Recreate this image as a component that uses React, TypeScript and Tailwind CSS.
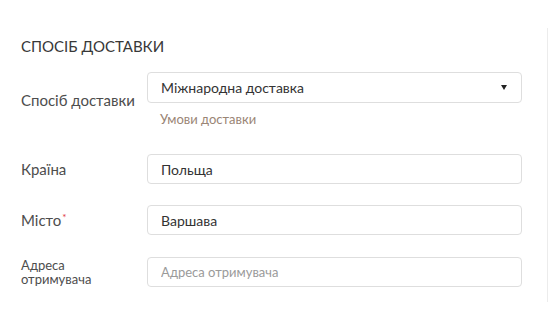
export default function App() {
  return (
    <div className="w-[548px] h-[330px] overflow-hidden bg-white pt-[28px] font-['Lato','Noto_Sans',sans-serif] text-[#333]">
      <div className="h-[274px] border-r border-[#ececec] pl-[21px] pr-[25px]">
        <h2 className="pt-[8px] text-[15px] leading-[20px] font-normal text-[#383838]">
          СПОСІБ ДОСТАВКИ
        </h2>
        <div className="mt-[16px] flex items-center">
          <div className="w-[126px] text-[15px] leading-[18px] text-[#4d4d4d]">Спосіб доставки</div>
          <div className="flex-1">
            <div className="h-[31px] rounded-[4px] border border-[#dedede] flex items-center justify-between pl-[13px] pr-[12px] text-[14px] text-[#333]">
              <span>Міжнародна доставка</span>
              <svg width="6" height="5" viewBox="0 0 6 5" className="mr-[2px]">
                <path d="M0 0 L6 0 L3 5 Z" fill="#222" />
              </svg>
            </div>
            <a className="mt-[7px] ml-[13px] block text-[13px] leading-[18px] text-[#9a8575]">Умови доставки</a>
          </div>
        </div>
        <div className="mt-[26px] flex items-center">
          <div className="w-[126px] text-[15px] leading-[18px] text-[#4d4d4d]">Країна</div>
          <div className="flex-1 h-[30px] rounded-[4px] border border-[#dedede] flex items-center pl-[13px] text-[14px] text-[#333]">
            Польща
          </div>
        </div>
        <div className="mt-[21px] flex items-center">
          <div className="w-[126px] text-[15px] leading-[18px] text-[#4d4d4d]">
            Місто<span className="relative top-[-5px] ml-[1px] text-[10px] leading-none text-[#e0393e]">*</span>
          </div>
          <div className="flex-1 h-[30px] rounded-[4px] border border-[#dedede] flex items-center pl-[13px] text-[14px] text-[#333]">
            Варшава
          </div>
        </div>
        <div className="mt-[22px] flex items-center">
          <div className="w-[126px] text-[13px] leading-[14px] text-[#4d4d4d]">
            Адреса
            <br />
            отримувача
          </div>
          <input
            className="flex-1 h-[30px] rounded-[4px] border border-[#dedede] pl-[13px] text-[13px] outline-none placeholder:text-[#9a9a9a]"
            placeholder="Адреса отримувача"
          />
        </div>
      </div>
    </div>
  );
}
